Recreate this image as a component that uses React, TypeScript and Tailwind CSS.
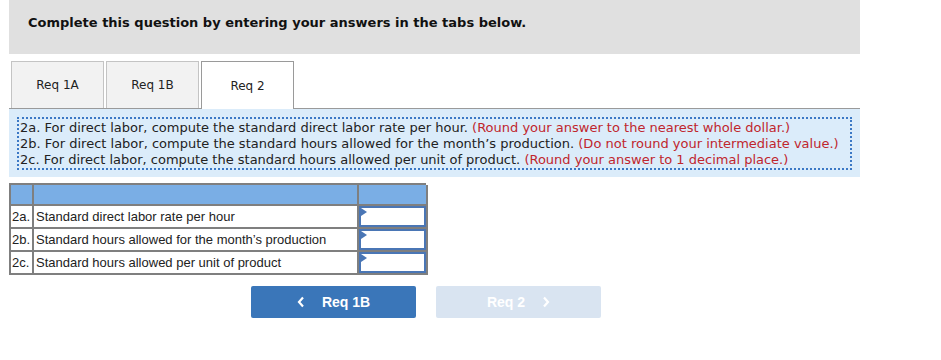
import React from "react";

const verdana = { fontFamily: '"DejaVu Sans", Verdana, sans-serif' };
const arial = { fontFamily: '"Liberation Sans", Arial, sans-serif' };

function InputCell() {
  return (
    <div className="h-[23px] border-r-2 border-b-2 border-[#7f7f7f]">
      <div className="relative h-full border-2 border-[#4a76b5] bg-white">
        <svg className="absolute left-0 top-0" width="6" height="8" viewBox="0 0 6 8">
          <polygon points="0,0 6,4 0,8" fill="#4a76b5" />
        </svg>
      </div>
    </div>
  );
}

export default function App() {
  const rows = [
    ["2a.", "Standard direct labor rate per hour"],
    ["2b.", "Standard hours allowed for the month\u2019s production"],
    ["2c.", "Standard hours allowed per unit of product"],
  ];
  return (
    <div className="w-[941px] h-[360px] bg-white relative">
      <div className="ml-[9px] w-[851px]">
        <div className="h-[54px] bg-[#e0e0e0] pl-[19px] pt-[15px]">
          <p className="text-[13px] font-bold text-[#111] leading-[16px]" style={verdana}>
            Complete this question by entering your answers in the tabs below.
          </p>
        </div>
        <div className="mt-[7px] flex items-end pl-[2px] gap-[2px] border-b border-[#9a9a9a] h-[48px]">
          <div className="w-[93px] h-[47px] bg-[#f2f2f2] border border-b-0 border-[#c4c4c4] flex items-center justify-center text-[12px] text-[#222]" style={verdana}>
            Req 1A
          </div>
          <div className="w-[93px] h-[47px] bg-[#f2f2f2] border border-b-0 border-[#c4c4c4] flex items-center justify-center text-[12px] text-[#222]" style={verdana}>
            Req 1B
          </div>
          <div className="w-[93px] h-[48px] bg-white border border-b-0 border-[#9a9a9a] flex items-center justify-center text-[12px] text-[#222] -mb-px" style={verdana}>
            Req 2
          </div>
        </div>
        <div className="bg-[#dbecfa] px-[8px] pt-[8px] pb-[7px]">
          <div className="border-2 border-dotted border-[#3b78c5] px-[1px] pt-[1px] text-[13px] leading-[16px] text-[#222]" style={verdana}>
            <div>
              2a. For direct labor, compute the standard direct labor rate per hour.{" "}
              <span className="text-[#c0262d]">(Round your answer to the nearest whole dollar.)</span>
            </div>
            <div>
              2b. For direct labor, compute the standard hours allowed for the month’s production.{" "}
              <span className="text-[#c0262d]">(Do not round your intermediate value.)</span>
            </div>
            <div>
              2c. For direct labor, compute the standard hours allowed per unit of product.{" "}
              <span className="text-[#c0262d]">(Round your answer to 1 decimal place.)</span>
            </div>
          </div>
        </div>
        <div
          className="mt-[6px] w-[417px] grid grid-cols-[23px_325px_69px] border-t-2 border-l-2 border-[#7f7f7f] text-[13px] text-[#222]"
          style={arial}
        >
          <div className="h-[21px] bg-[#7aaee5] border-r-2 border-b-2 border-[#7f7f7f]"></div>
          <div className="h-[21px] bg-[#7aaee5] border-r-2 border-b-2 border-[#7f7f7f]"></div>
          <div className="h-[21px] bg-[#7aaee5] border-r-2 border-b-2 border-[#7f7f7f]"></div>
          {rows.map(([k, v]) => (
            <React.Fragment key={k}>
              <div className="h-[23px] border-r-2 border-b-2 border-[#7f7f7f] pl-[1px] leading-[21px]">{k}</div>
              <div className="h-[23px] border-r-2 border-b-2 border-[#7f7f7f] pl-[2px] leading-[21px]">{v}</div>
              <InputCell />
            </React.Fragment>
          ))}
        </div>
        <div className="mt-[11px] flex gap-[20px] pl-[242px]" style={arial}>
          <button className="w-[165px] h-[32px] rounded-[2px] bg-[#3a76b9] text-white text-[14px] font-bold flex items-center justify-center">
            <svg width="8" height="12" viewBox="0 0 8 12" className="mr-[17px]">
              <polyline points="6,1.5 2,6 6,10.5" fill="none" stroke="white" strokeWidth="2.2" />
            </svg>
            Req 1B
          </button>
          <button className="w-[165px] h-[32px] rounded-[2px] bg-[#d9e4f1] text-white text-[14px] font-bold flex items-center justify-center">
            Req 2
            <svg width="8" height="12" viewBox="0 0 8 12" className="ml-[17px]">
              <polyline points="2,1.5 6,6 2,10.5" fill="none" stroke="white" strokeWidth="2.2" />
            </svg>
          </button>
        </div>
      </div>
    </div>
  );
}
